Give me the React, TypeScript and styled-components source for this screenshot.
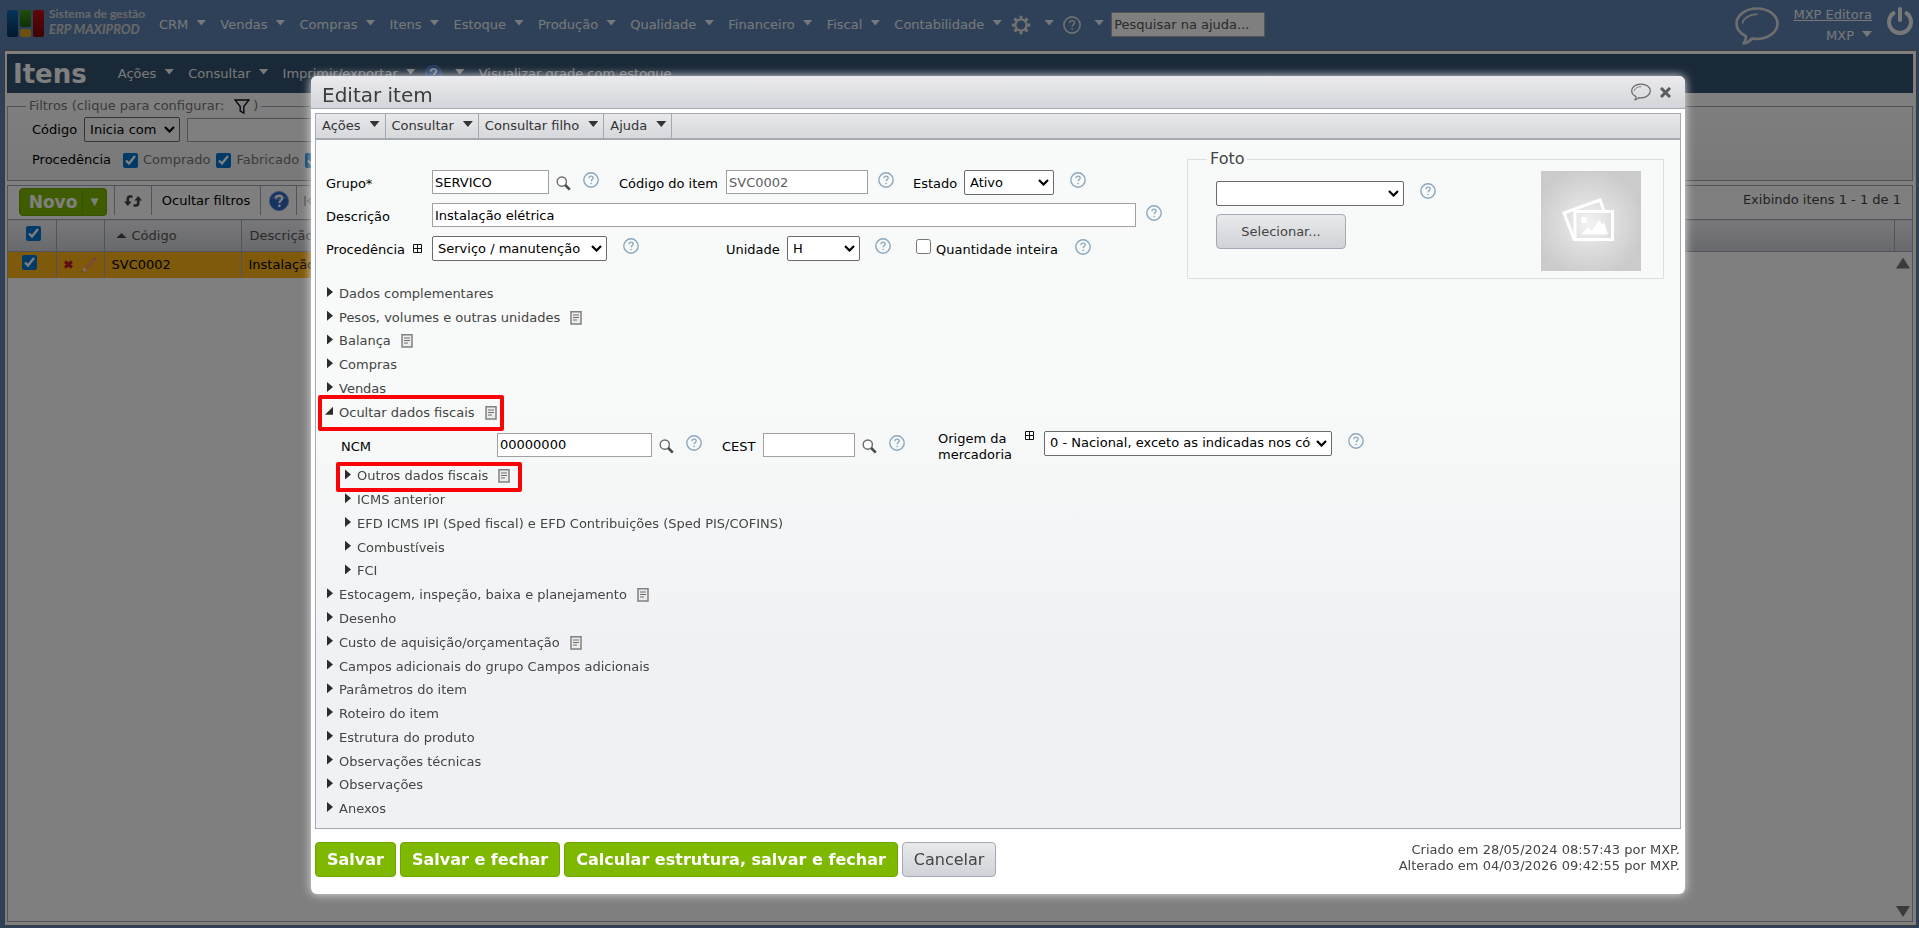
import React, { useId } from 'react';
import styled, { createGlobalStyle, css } from 'styled-components';

const GlobalStyle = createGlobalStyle`
  * { box-sizing: border-box; }
  body {
    margin: 0;
    background: #5d83b3;
    color: #000;
    font: 13px/16px Verdana, "DejaVu Sans", sans-serif;
  }
  button, input, select { font: inherit; margin: 0; }
  button { cursor: pointer; }
  svg { display: block; flex: none; }
`;

/* ---------- icons ---------- */

const Caret = styled.span`
  flex: none;
  width: 10px;
  height: 6px;
  margin-bottom: 4px;
  background: currentColor;
  clip-path: polygon(0 0, 100% 0, 50% 100%);
`;

const HelpGlyph = ({ size = 16, stroke = '#8aa7bd' }: { size?: number; stroke?: string }) => (
  <svg width={size} height={size} viewBox="0 0 16 16" fill="none" stroke={stroke}>
    <circle cx="8" cy="8" r="7.2" strokeWidth="1.4" />
    <path d="M5.9 6.2c0-1.3.9-2.1 2.2-2.1s2.1.8 2.1 1.9c0 1.5-2 1.6-2 3.3" strokeWidth="1.3" />
    <circle cx="8.1" cy="11.4" r=".5" strokeWidth=".7" fill={stroke} />
  </svg>
);

const BlueHelp = ({ size = 20 }: { size?: number }) => (
  <svg width={size} height={size} viewBox="0 0 20 20">
    <circle cx="10" cy="10" r="9.5" fill="#2f66c0" stroke="#6f98dc" />
    <path d="M3 7.500a7.500 6 0 0 1 14 0q-7 3-14 0z" fill="#6f9be0" opacity=".7" />
    <path d="M6.900 7.600c0-2 1.300-3 3.200-3s3.100 1.100 3.100 2.700c0 2.200-2.700 2.300-2.700 4.600" fill="none" stroke="#fff" strokeWidth="2.200" />
    <circle cx="10.400" cy="14.800" r="1.400" fill="#fff" />
  </svg>
);

const Lens = () => (
  <svg width="15" height="15" viewBox="0 0 15 15" fill="none">
    <circle cx="5.800" cy="5.600" r="4.600" stroke="#6a6a6a" strokeWidth="1.400" fill="#fff" />
    <path d="M9.200 9l4.600 4.600" stroke="#4a4a4a" strokeWidth="2.600" />
  </svg>
);

const PlusBox = () => (
  <svg width="9" height="9" viewBox="0 0 9 9" fill="none" stroke="#111">
    <path d="M.5.5h8v8h-8zM4.500.5v8M.5 4.500h8" />
  </svg>
);

const Note = () => (
  <svg width="12" height="14" viewBox="0 0 12 14" fill="none">
    <path d="M1 .8h10v12.200H1z" stroke="#808080" strokeWidth="1.500" fill="#ececec" />
    <path d="M3 4h6M3 6.500h6M3 9h4" stroke="#6c6c6c" />
  </svg>
);

const Balloon = ({ width, height, color, weight }: { width: number; height: number; color: string; weight: number }) => (
  <svg width={width} height={height} viewBox="0 0 44 38" fill="none" stroke={color} strokeWidth={weight} strokeLinejoin="round">
    <path d="M22 1.500c11.300 0 20.500 6.600 20.500 15S33.600 31.800 22.300 32c-1.800 0-3.500-.2-5-.5-2.200 2.400-4.900 4.300-8.800 5 1.900-2.300 2.800-4.800 2.500-7.400C5.200 26.400 1.500 21.800 1.500 16.500c0-8.400 9.200-15 20.500-15z" />
    <path d="M7.500 16.500c.6-5 6.500-9 15-9.300" strokeWidth={weight * 0.7} />
  </svg>
);

const Gear = () => (
  <svg width="20" height="20" viewBox="0 0 20 20" fill="none" stroke="#e4e4e4" strokeWidth="2" strokeLinejoin="round">
    <circle cx="10" cy="10" r="5.600" strokeWidth="2.200" />
    <path strokeWidth="3" d="M10 .8v3M10 16.200v3M.8 10h3M16.200 10h3M3.500 3.500l2.100 2.100M14.400 14.400l2.100 2.100M16.500 3.500l-2.100 2.100M5.600 14.400l-2.100 2.100" />
  </svg>
);

const Power = () => (
  <svg width="26" height="28" viewBox="0 0 26 28" fill="none" stroke="#f0f0f0" strokeWidth="4" strokeLinecap="round">
    <path d="M13 2v11" />
    <path d="M6.500 6.200a11 11 0 1 0 13 0" />
  </svg>
);

const Funnel = () => (
  <svg width="16" height="15" viewBox="0 0 16 15" fill="none" stroke="#111" strokeWidth="1.400">
    <path d="M1 1h14L9.800 7.500V14L6.200 12V7.500z" />
  </svg>
);

const Refresh = () => (
  <svg width="18" height="12" viewBox="0 0 18 12" fill="none" stroke="#444" strokeWidth="2.600">
    <path d="M8.500 1.500H6Q3.800 1.500 3.800 4v4" />
    <path d="M0 6.500h7.600L3.800 11z" fill="#444" stroke="none" />
    <path d="M9.500 10.500H12q2.200 0 2.200-2.500V4" />
    <path d="M10.400 5.500H18L14.200 1z" fill="#444" stroke="none" />
  </svg>
);

const FirstPage = () => (
  <svg width="10" height="10" viewBox="0 0 10 10" fill="none" stroke="#b4b4b4" strokeWidth="2">
    <path d="M1 0v10M9 .5L4 5l5 4.500" />
  </svg>
);

const Pencil = () => (
  <svg width="16" height="16" viewBox="0 0 16 16">
    <path d="M3 10.500L12.500 1l3 2L6 13z" fill="#ff9a5c" />
    <path d="M12 1.500L13.500 0l2.500 1.500-1 1.800z" fill="#e68a72" />
    <path d="M3 10.500L6 13l-5 2.500z" fill="#f4e2c8" />
    <path d="M1.500 14l1 1-1.500.6z" fill="#444" />
  </svg>
);

const RedCross = () => (
  <svg width="9" height="9" viewBox="0 0 9 9" stroke="#c4182a" strokeWidth="3">
    <path d="M1 1.500l7 6M8 1.500l-7 6" />
  </svg>
);

const CloseCross = () => (
  <svg width="11" height="11" viewBox="0 0 11 11" stroke="#5c5c5c" strokeWidth="3">
    <path d="M1 1l9 9M10 1L1 10" />
  </svg>
);

const Chevron = () => (
  <svg width="11" height="7" viewBox="0 0 11 7" fill="none" stroke="#000" strokeWidth="2.200">
    <path d="M1 1l4.500 4.500L10 1" />
  </svg>
);

const LogoBars = () => (
  <svg width="37" height="28" viewBox="0 0 37 28">
    <defs>
      <linearGradient id="bar-blue" x1="0" y1="0" x2="0" y2="1"><stop stopColor="#0c6ab0" /><stop offset="1" stopColor="#06305c" /></linearGradient>
      <linearGradient id="bar-green" x1="0" y1="0" x2="0" y2="1"><stop stopColor="#3f9c14" /><stop offset="1" stopColor="#1f5f10" /></linearGradient>
      <linearGradient id="bar-red" x1="0" y1="0" x2="0" y2="1"><stop stopColor="#c60c10" /><stop offset="1" stopColor="#7c0606" /></linearGradient>
    </defs>
    <rect width="11" height="27" rx="2" fill="url(#bar-blue)" />
    <rect x="13" width="11" height="17" rx="2" fill="url(#bar-green)" />
    <rect x="13" y="19" width="11" height="8" rx="2" fill="#d6a41c" />
    <rect x="26" width="11" height="27" rx="2" fill="url(#bar-red)" />
  </svg>
);

const PhotoPlaceholder = () => (
  <svg width="100" height="100" viewBox="0 0 100 100" role="img" aria-label="Sem foto">
    <defs>
      <radialGradient id="photo-glow" cx=".48" cy=".52" r=".55">
        <stop stopColor="#f4f4f4" /><stop offset=".45" stopColor="#dedede" /><stop offset="1" stopColor="#cbcbcb" />
      </radialGradient>
    </defs>
    <rect width="100" height="100" fill="url(#photo-glow)" />
    <g fill="none" stroke="#fff" strokeWidth="3">
      <path d="M34 68h-1L23 42l36-13 4 11" />
      <path d="M34 40.500h37.500v28H34z" />
    </g>
    <circle cx="43" cy="49" r="3.200" fill="#fff" />
    <path d="M40 63.500l7-7 4 3 7-11 3 5 2-2 4 12z" fill="#fff" />
  </svg>
);

/* ---------- page behind the dialog ---------- */

const Page = styled.div`
  display: flex;
  flex-direction: column;
  height: 100vh;
  overflow: hidden;
`;

const TopBar = styled.header`
  display: flex;
  align-items: flex-start;
  height: 50px;
  flex: none;
  padding-left: 7px;
  color: #f0f0f0;
`;

const Logo = styled.div`
  display: flex;
  align-items: flex-start;
  gap: 5px;
  width: 152px;
  padding-top: 10px;
  color: #d0d0d0;
  font: 700 12px/14px Lato, sans-serif;
`;

const LogoText = styled.div`
  margin-top: -3px;
  white-space: nowrap;
  em { display: block; font-size: 13px; line-height: 16px; }
`;

const MenuRow = styled.nav<{ $pad?: number }>`
  display: flex;
  align-items: center;
  gap: 14px;
  padding-top: ${(p) => p.$pad ?? 0}px;
  white-space: nowrap;
`;

const MenuButton = styled.button<{ $icon?: boolean }>`
  display: flex;
  align-items: center;
  gap: ${(p) => (p.$icon ? 13 : 8)}px;
  margin-left: ${(p) => (p.$icon ? -5 : 0)}px;
  padding: 0;
  border: 0;
  background: none;
  color: #f0f0f0;
`;

const HelpSearch = styled.input`
  width: 154px;
  height: 25px;
  margin-left: -7px;
  padding: 0 2px;
  border: 1px solid #aaa;
  background: #fff;
  &::placeholder { color: #555; opacity: 1; }
`;

const Account = styled.div`
  display: flex;
  align-items: flex-start;
  margin-left: auto;
  padding: 7px 6px 0 0;
`;

const AccountText = styled.div`
  display: flex;
  flex-direction: column;
  align-items: flex-end;
  gap: 5px;
  width: 93px;
  margin-right: 15px;
  a { color: inherit; }
`;

const Main = styled.main`
  display: flex;
  flex-direction: column;
  flex: 1;
  min-height: 0;
  margin: 0 2px 2px 4px;
  padding: 3px 3px 3px 2px;
  border: 1px solid #777;
  background: #fff;
`;

const TitleBar = styled.div`
  display: flex;
  align-items: center;
  gap: 31px;
  height: 39px;
  flex: none;
  padding-left: 6px;
  background: #355270;
  h1 { margin: 0; color: #fff; font-size: 26px; line-height: 32px; }
`;

const Filters = styled.fieldset`
  position: relative;
  height: 84px;
  flex: none;
  margin: 4px 0;
  padding: 2px 0 0 24px;
  border: 1px solid #a2a8b4;
  background: linear-gradient(#fdfdfd, #f0f1f1);
  legend {
    display: flex;
    align-items: center;
    height: 18px;
    margin-left: -6px;
    padding: 0 3px;
    color: #777;
  }
  legend svg { margin: 0 3px 0 10px; }
`;

const Line = styled.div<{ $h: number; $gap: number }>`
  display: flex;
  align-items: center;
  gap: ${(p) => p.$gap}px;
  height: ${(p) => p.$h}px;
`;

const Check = styled.input.attrs({ type: 'checkbox' })`
  flex: none;
  width: 15px;
  height: 15px;
  accent-color: #0075d0;
`;

const CheckLabel = styled.label`
  display: flex;
  align-items: center;
  gap: 5px;
  color: #777;
`;

const TextBox = styled.input<{ $w: number }>`
  flex: none;
  width: ${(p) => p.$w}px;
  height: 24px;
  padding: 0 2px;
  border: 1px solid #a0a0a0;
  background: #fff;
  color: #000;
  &:disabled { color: #606060; }
`;

const SelectFrame = styled.span<{ $w: number }>`
  position: relative;
  display: block;
  flex: none;
  width: ${(p) => p.$w}px;
  height: 25px;
  select {
    appearance: none;
    display: block;
    width: 100%;
    height: 100%;
    padding: 0 20px 0 5px;
    border: 1px solid #6b6b6b;
    border-radius: 2px;
    background: #fff;
    color: #000;
  }
  svg { position: absolute; top: 9px; right: 5px; pointer-events: none; }
`;

const Select = ({ w, children, ...rest }: { w: number } & React.SelectHTMLAttributes<HTMLSelectElement>) => (
  <SelectFrame $w={w}>
    <select {...rest}>{children}</select>
    <Chevron />
  </SelectFrame>
);

const Grid = styled.section`
  display: flex;
  flex-direction: column;
  flex: 1;
  min-height: 0;
  border: 1px solid #a2a8b4;
`;

const GridTools = styled.div`
  display: flex;
  height: 33px;
  flex: none;
  padding-left: 11px;
`;

const Split = styled.div`
  display: flex;
  height: 28px;
  margin: 2px 7px 0 0;
  button {
    border: 1px solid #6fa400;
    background: #7fb800;
    color: #fff;
    padding: 0;
    font-size: 10px;
  }
  button:first-child { width: 64px; border-radius: 4px 0 0 4px; padding-left: 4px; font-size: 17px; font-weight: 700; }
  button:last-child { width: 24px; border-left-width: 0; border-radius: 0 4px 4px 0; }
`;

const Tool = styled.button<{ $w: number }>`
  display: flex;
  align-items: center;
  justify-content: center;
  width: ${(p) => p.$w}px;
  height: 29px;
  padding: 0;
  border: 0;
  border-left: 1px solid #a2a8b4;
  background: none;
  white-space: nowrap;
`;

const Count = styled.div`
  margin-left: auto;
  padding: 6px 11px 0 0;
  color: #444;
`;

const Table = styled.table`
  width: 100%;
  flex: none;
  border-collapse: collapse;
  table-layout: fixed;
  th {
    height: 32px;
    padding: 0 8px;
    border: 1px solid #a2a8b4;
    border-width: 1px 1px 1px 0;
    background: linear-gradient(#f0f1f4, #d0d2d7);
    color: #555;
    font-weight: 400;
    text-align: left;
  }
  td {
    height: 26px;
    padding: 0 7px;
    border-right: 1px solid #a2a8b4;
    background: #ffb414;
    white-space: nowrap;
  }
  th:last-child { border-right: 0; }
  td:empty { border: 0; background: #fff; }
`;

const Cell = styled.div<{ $gap?: number; $center?: boolean }>`
  display: flex;
  align-items: center;
  gap: ${(p) => p.$gap ?? 5}px;
  justify-content: ${(p) => (p.$center ? 'center' : 'flex-start')};
`;

const SortMark = styled.span`
  width: 10px;
  height: 5px;
  margin-left: 4px;
  background: #444;
  clip-path: polygon(0 100%, 100% 100%, 50% 0);
`;

const ScrollTrack = styled.div`
  display: flex;
  flex-direction: column;
  justify-content: space-between;
  align-self: flex-end;
  flex: 1;
  width: 18px;
  margin-top: -20px;
  padding: 0 2px 4px;
`;

const ScrollButton = styled.button<{ $down?: boolean }>`
  width: 14px;
  height: 11px;
  padding: 0;
  border: 0;
  background: #777;
  clip-path: ${(p) => (p.$down ? 'polygon(0 0, 100% 0, 50% 100%)' : 'polygon(0 100%, 100% 100%, 50% 0)')};
`;

/* ---------- dialog ---------- */

const Shade = styled.div`
  position: fixed;
  inset: 0;
  background: rgba(0, 0, 0, 0.5);
`;

const Dialog = styled.div`
  position: absolute;
  inset: 76px 234px 34px 311px;
  display: flex;
  flex-direction: column;
  border-radius: 6px;
  background: #fff;
  box-shadow: 0 0 10px #e8e8e8;
`;

const DialogHead = styled.div`
  display: flex;
  align-items: center;
  gap: 9px;
  height: 33px;
  flex: none;
  padding: 0 14px 0 11px;
  border-bottom: 1px solid #a2a9b2;
  border-radius: 6px 6px 0 0;
  background: linear-gradient(#ebebee, #d2d5d9);
  h2 { flex: 1; margin: 6px 0 0; color: #3c3c3c; font-size: 20px; font-weight: 400; line-height: 24px; }
`;

const IconButton = styled.button`
  display: flex;
  padding: 0;
  border: 0;
  background: none;
`;

const Panel = styled.div`
  display: flex;
  flex-direction: column;
  flex: 1;
  min-height: 0;
  margin: 4px 4px 0;
  padding-bottom: 7px;
  border: 1px solid #a2a9b2;
  background: linear-gradient(#f8faf9 40%, #f0f1f4 75%);
`;

const PanelMenu = styled.div`
  display: flex;
  height: 26px;
  flex: none;
  border-bottom: 2px solid #a2aab2;
  background: linear-gradient(#e8e8eb, #d6d8dc);
`;

const PanelMenuButton = styled.button`
  display: flex;
  align-items: center;
  gap: 9px;
  padding: 0 5px 0 6px;
  border: 0;
  border-right: 1px solid #a2a9b2;
  background: none;
  color: #333;
`;

const FormTop = styled.div`
  display: flex;
  justify-content: space-between;
  height: 142px;
  flex: none;
  padding: 9px 16px 0 10px;
`;

const Fields = styled.div`
  display: flex;
  flex-direction: column;
  gap: 8px;
  padding-top: 21px;
`;

const FieldRow = styled.div`
  display: flex;
  align-items: flex-start;
  height: 25px;
`;

const Field = styled.div<{ $w?: number; $top?: number }>`
  display: flex;
  align-items: flex-start;
  width: ${(p) => (p.$w ? `${p.$w}px` : 'auto')};
  padding-top: ${(p) => p.$top ?? 0}px;
`;

const Label = styled.label<{ $w: number }>`
  flex: none;
  width: ${(p) => p.$w}px;
  line-height: 28px;
  white-space: nowrap;
`;

const TwoLineLabel = styled(Label)`
  line-height: 16px;
  white-space: normal;
`;

const Slot = styled.span<{ $top: number; $left: number }>`
  flex: none;
  margin: ${(p) => p.$top}px 0 0 ${(p) => p.$left}px;
`;

const LabelBox = styled.div`
  display: flex;
  flex: none;
  width: 106px;
`;

const Photo = styled.fieldset`
  display: flex;
  align-items: flex-start;
  width: 477px;
  height: 130px;
  margin: 0;
  padding: 0 22px 0 28px;
  border: 1px solid #dcdfe0;
  legend { margin-left: -9px; padding: 0 3px; color: #444; font-size: 16px; line-height: 20px; }
`;

const PhotoControls = styled.div`
  display: flex;
  flex-direction: column;
  align-items: flex-start;
  gap: 8px;
  flex: 1;
  padding-top: 12px;
`;

const PhotoImage = styled.div`
  padding-top: 2px;
`;

const grayButton = css`
  border: 1px solid #a2aab6;
  border-radius: 4px;
  background: linear-gradient(#e9eaec, #d0d2d7);
  color: #444;
`;

const SelectFile = styled.button`
  ${grayButton}
  width: 130px;
  height: 35px;
`;

const SectionList = styled.ul<{ $rows: number }>`
  display: grid;
  grid-auto-rows: 1fr;
  flex: ${(p) => p.$rows};
  min-height: 0;
  margin: 0;
  padding: 0;
  list-style: none;
`;

const SectionItem = styled.li<{ $nested?: boolean }>`
  position: relative;
  display: flex;
  align-items: center;
  padding-left: ${(p) => (p.$nested ? 29 : 11)}px;
`;

const SectionButton = styled.button<{ $open?: boolean }>`
  display: flex;
  align-items: center;
  padding: 0;
  border: 0;
  background: none;
  color: #444;
  white-space: nowrap;
  &::before {
    content: "";
    width: ${(p) => (p.$open ? 8 : 6)}px;
    height: ${(p) => (p.$open ? 8 : 10)}px;
    margin: 0 6px 4px ${(p) => (p.$open ? -2 : 0)}px;
    background: #2c2c2c;
    clip-path: ${(p) => (p.$open ? 'polygon(100% 0, 100% 100%, 0 100%)' : 'polygon(0 0, 100% 50%, 0 100%)')};
  }
  svg { margin-left: 10px; }
`;

const Marker = styled.span<{ $tall?: boolean }>`
  position: absolute;
  top: ${(p) => (p.$tall ? -6 : -3)}px;
  left: ${(p) => (p.$tall ? 2 : 20)}px;
  width: 186px;
  height: ${(p) => (p.$tall ? 36 : 30)}px;
  border: 4px solid #fb0207;
  border-radius: 2px;
  pointer-events: none;
`;

const FiscalRow = styled.div`
  display: flex;
  align-items: flex-start;
  height: 40px;
  flex: none;
  padding: 6px 0 0 25px;
`;

const DialogFoot = styled.div`
  display: flex;
  align-items: flex-start;
  gap: 4px;
  height: 65px;
  flex: none;
  padding: 13px 5px 0 4px;
`;

const SaveButton = styled.button`
  height: 35px;
  padding: 0 11px;
  border: 1px solid #6fa400;
  border-radius: 4px;
  background: #7fb800;
  color: #fff;
  font-size: 16px;
  font-weight: 700;
`;

const CancelButton = styled.button`
  ${grayButton}
  height: 35px;
  padding: 0 11px;
  font-size: 16px;
`;

const Audit = styled.p`
  margin: 0 0 0 auto;
  color: #444;
  text-align: right;
`;

/* ---------- data ---------- */

const modules = ['CRM', 'Vendas', 'Compras', 'Itens', 'Estoque', 'Produção', 'Qualidade', 'Financeiro', 'Fiscal', 'Contabilidade'];

type Section = { name: string; note?: boolean; open?: boolean; nested?: boolean; marked?: boolean };

const upperSections: Section[] = [
  { name: 'Dados complementares' },
  { name: 'Pesos, volumes e outras unidades', note: true },
  { name: 'Balança', note: true },
  { name: 'Compras' },
  { name: 'Vendas' },
  { name: 'Ocultar dados fiscais', note: true, open: true, marked: true },
];

const lowerSections: Section[] = [
  { name: 'Outros dados fiscais', note: true, nested: true, marked: true },
  { name: 'ICMS anterior', nested: true },
  { name: 'EFD ICMS IPI (Sped fiscal) e EFD Contribuições (Sped PIS/COFINS)', nested: true },
  { name: 'Combustíveis', nested: true },
  { name: 'FCI', nested: true },
  { name: 'Estocagem, inspeção, baixa e planejamento', note: true },
  { name: 'Desenho' },
  { name: 'Custo de aquisição/orçamentação', note: true },
  { name: 'Campos adicionais do grupo Campos adicionais' },
  { name: 'Parâmetros do item' },
  { name: 'Roteiro do item' },
  { name: 'Estrutura do produto' },
  { name: 'Observações técnicas' },
  { name: 'Observações' },
  { name: 'Anexos' },
];

const Help = ({ left, top = 2 }: { left: number; top?: number }) => (
  <Slot $top={top} $left={left}>
    <IconButton type="button" aria-label="Ajuda"><HelpGlyph /></IconButton>
  </Slot>
);

const Search = ({ left }: { left: number }) => (
  <Slot $top={6} $left={left}>
    <IconButton type="button" aria-label="Procurar"><Lens /></IconButton>
  </Slot>
);

const Sections = ({ items }: { items: Section[] }) => (
  <SectionList $rows={items.length}>
    {items.map((s) => (
      <SectionItem key={s.name} $nested={s.nested}>
        <SectionButton type="button" $open={s.open} aria-expanded={!!s.open}>
          {s.name}
          {s.note && <Note />}
        </SectionButton>
        {s.marked && <Marker $tall={s.open} />}
      </SectionItem>
    ))}
  </SectionList>
);

const FilterCheck = ({ children }: { children: React.ReactNode }) => (
  <CheckLabel><Check defaultChecked />{children}</CheckLabel>
);

export default function App() {
  const id = useId();
  return (
    <>
      <GlobalStyle />
      <Page>
        <TopBar>
          <Logo>
            <LogoBars />
            <LogoText>Sistema de gestão<em>ERP MAXIPROD</em></LogoText>
          </Logo>
          <MenuRow $pad={12}>
            {modules.map((m) => (
              <MenuButton key={m}>{m}<Caret /></MenuButton>
            ))}
            <MenuButton $icon aria-label="Configurações"><Gear /><Caret /></MenuButton>
            <MenuButton $icon aria-label="Ajuda"><HelpGlyph size={18} stroke="#e4e4e4" /><Caret /></MenuButton>
            <HelpSearch placeholder="Pesquisar na ajuda..." aria-label="Pesquisar na ajuda" />
          </MenuRow>
          <Account>
            <Balloon width={44} height={38} color="#ddd" weight={2.6} />
            <AccountText>
              <a href="#empresa">MXP Editora</a>
              <MenuButton>MXP<Caret /></MenuButton>
            </AccountText>
            <IconButton aria-label="Sair"><Power /></IconButton>
          </Account>
        </TopBar>
        <Main>
          <TitleBar>
            <h1>Itens</h1>
            <MenuRow>
              <MenuButton>Ações<Caret /></MenuButton>
              <MenuButton>Consultar<Caret /></MenuButton>
              <MenuButton>Imprimir/exportar<Caret /></MenuButton>
              <MenuButton $icon aria-label="Ajuda"><BlueHelp size={17} /><Caret /></MenuButton>
              <MenuButton>Visualizar grade com estoque</MenuButton>
            </MenuRow>
          </TitleBar>
          <Filters>
            <legend>Filtros (clique para configurar:<Funnel />)</legend>
            <Line $h={25} $gap={7}>
              <label htmlFor={id + 'cod'}>Código</label>
              <Select id={id + 'cod'} w={96}><option>Inicia com</option></Select>
              <TextBox $w={300} aria-label="Valor do código" />
            </Line>
            <Line $h={36} $gap={6}>
              <Label as="span" $w={85}>Procedência</Label>
              <FilterCheck>Comprado</FilterCheck>
              <FilterCheck>Fabricado</FilterCheck>
              <FilterCheck>Serviço</FilterCheck>
            </Line>
          </Filters>
          <Grid>
            <GridTools>
              <Split><button type="button">Novo</button><button type="button" aria-label="Mais opções">▼</button></Split>
              <Tool $w={37} aria-label="Atualizar"><Refresh /></Tool>
              <Tool $w={109}>Ocultar filtros</Tool>
              <Tool $w={36} aria-label="Ajuda"><BlueHelp /></Tool>
              <Tool $w={24} aria-label="Primeira página"><FirstPage /></Tool>
              <Count>Exibindo itens 1 - 1 de 1</Count>
            </GridTools>
            <Table>
              <colgroup>
                <col width="48" /><col width="48" /><col width="137" /><col width="500" /><col /><col width="18" />
              </colgroup>
              <thead>
                <tr>
                  <th><Cell $gap={0}><Slot $top={0} $left={10}><Check defaultChecked aria-label="Selecionar todos" /></Slot></Cell></th>
                  <th />
                  <th><Cell><SortMark />Código</Cell></th>
                  <th>Descrição</th>
                  <th />
                  <th />
                </tr>
              </thead>
              <tbody>
                <tr>
                  <td><Cell $gap={0}><Slot $top={0} $left={7}><Check defaultChecked aria-label="Selecionar SVC0002" /></Slot></Cell></td>
                  <td><Cell $gap={8}><RedCross /><Pencil /></Cell></td>
                  <td>SVC0002</td>
                  <td>Instalação elétrica</td>
                  <td></td>
                  <td></td>
                </tr>
              </tbody>
            </Table>
            <ScrollTrack>
              <ScrollButton aria-label="Rolar para cima" />
              <ScrollButton $down aria-label="Rolar para baixo" />
            </ScrollTrack>
          </Grid>
        </Main>
      </Page>

      <Shade>
        <Dialog role="dialog" aria-labelledby={id + 'title'}>
          <DialogHead>
            <h2 id={id + 'title'}>Editar item</h2>
            <IconButton aria-label="Comentários"><Balloon width={20} height={18} color="#666" weight={2.6} /></IconButton>
            <IconButton aria-label="Fechar"><CloseCross /></IconButton>
          </DialogHead>
          <Panel>
            <PanelMenu>
              {['Ações', 'Consultar', 'Consultar filho', 'Ajuda'].map((m) => (
                <PanelMenuButton key={m} type="button">{m}<Caret /></PanelMenuButton>
              ))}
            </PanelMenu>
            <FormTop>
              <Fields>
                <FieldRow>
                  <Field $w={293}>
                    <Label $w={106} htmlFor={id + 'grupo'}>Grupo*</Label>
                    <TextBox $w={117} id={id + 'grupo'} defaultValue="SERVICO" />
                    <Search left={7} />
                    <Help left={12} />
                  </Field>
                  <Field $w={294}>
                    <Label $w={107} htmlFor={id + 'codigo'}>Código do item</Label>
                    <TextBox $w={142} id={id + 'codigo'} defaultValue="SVC0002" disabled />
                    <Help left={10} />
                  </Field>
                  <Field>
                    <Label $w={51} htmlFor={id + 'estado'}>Estado</Label>
                    <Select w={90} id={id + 'estado'}><option>Ativo</option></Select>
                    <Help left={16} />
                  </Field>
                </FieldRow>
                <FieldRow>
                  <Label $w={106} htmlFor={id + 'desc'}>Descrição</Label>
                  <TextBox $w={704} id={id + 'desc'} defaultValue="Instalação elétrica" />
                  <Help left={10} />
                </FieldRow>
                <FieldRow>
                  <Field $w={400}>
                    <LabelBox>
                      <Label $w={87} htmlFor={id + 'proc'}>Procedência</Label>
                      <Slot $top={8} $left={0}><PlusBox /></Slot>
                    </LabelBox>
                    <Select w={175} id={id + 'proc'}><option>Serviço / manutenção</option></Select>
                    <Help left={16} />
                  </Field>
                  <Field $w={190}>
                    <Label $w={61} htmlFor={id + 'un'}>Unidade</Label>
                    <Select w={73} id={id + 'un'}><option>H</option></Select>
                    <Help left={15} />
                  </Field>
                  <Field>
                    <Slot $top={3} $left={0}><Check id={id + 'qtd'} /></Slot>
                    <Slot $top={0} $left={5}><Label $w={123} htmlFor={id + 'qtd'}>Quantidade inteira</Label></Slot>
                    <Help left={17} top={3} />
                  </Field>
                </FieldRow>
              </Fields>
              <Photo>
                <legend>Foto</legend>
                <PhotoControls>
                  <Field>
                    <Select w={188} aria-label="Foto"><option></option></Select>
                    <Help left={16} />
                  </Field>
                  <SelectFile type="button">Selecionar...</SelectFile>
                </PhotoControls>
                <PhotoImage><PhotoPlaceholder /></PhotoImage>
              </Photo>
            </FormTop>

            <Sections items={upperSections} />
            <FiscalRow>
              <Field $w={381} $top={2}>
                <Label $w={156} htmlFor={id + 'ncm'}>NCM</Label>
                <TextBox $w={155} id={id + 'ncm'} defaultValue="00000000" />
                <Search left={7} />
                <Help left={12} />
              </Field>
              <Field $w={216} $top={2}>
                <Label $w={41} htmlFor={id + 'cest'}>CEST</Label>
                <TextBox $w={92} id={id + 'cest'} />
                <Search left={7} />
                <Help left={12} />
              </Field>
              <Field>
                <TwoLineLabel $w={87} htmlFor={id + 'orig'}>Origem da mercadoria</TwoLineLabel>
                <PlusBox />
                <Slot $top={0} $left={10}>
                  <Select w={288} id={id + 'orig'}>
                    <option>0 - Nacional, exceto as indicadas nos códigos 3, 4, 5 e 8</option>
                  </Select>
                </Slot>
                <Help left={16} />
              </Field>
            </FiscalRow>
            <Sections items={lowerSections} />
          </Panel>
          <DialogFoot>
            <SaveButton type="button">Salvar</SaveButton>
            <SaveButton type="button">Salvar e fechar</SaveButton>
            <SaveButton type="button">Calcular estrutura, salvar e fechar</SaveButton>
            <CancelButton type="button">Cancelar</CancelButton>
            <Audit>
              Criado em 28/05/2024 08:57:43 por MXP.<br />
              Alterado em 04/03/2026 09:42:55 por MXP.
            </Audit>
          </DialogFoot>
        </Dialog>
      </Shade>
    </>
  );
}
